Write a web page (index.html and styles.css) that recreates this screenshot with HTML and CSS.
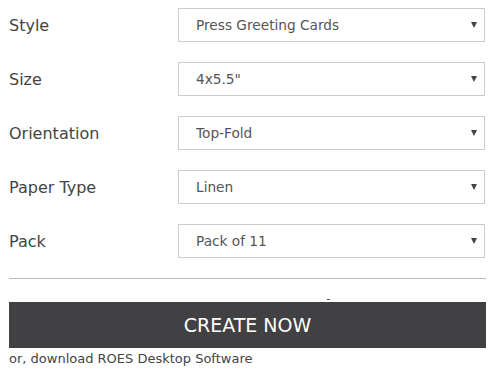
FILE: index.html
```html
<!DOCTYPE html>
<html lang="en">
<head>
    <meta charset="UTF-8">
    <meta name="viewport" content="width=device-width, initial-scale=1.0">
    <title>Press Greeting Cards</title>
    <link rel="stylesheet" href="styles.css">
</head>
<body>

<form class="options">
    <div class="row">
        <label for="style">Style</label>
        <div class="select-box">
            <select id="style">
                <option>Press Greeting Cards</option>
            </select>
        </div>
    </div>
    <div class="row">
        <label for="size">Size</label>
        <div class="select-box">
            <select id="size">
                <option>4x5.5"</option>
            </select>
        </div>
    </div>
    <div class="row">
        <label for="orientation">Orientation</label>
        <div class="select-box">
            <select id="orientation">
                <option>Top-Fold</option>
            </select>
        </div>
    </div>
    <div class="row">
        <label for="paper">Paper Type</label>
        <div class="select-box">
            <select id="paper">
                <option>Linen</option>
            </select>
        </div>
    </div>
    <div class="row">
        <label for="pack">Pack</label>
        <div class="select-box">
            <select id="pack">
                <option>Pack of 11</option>
            </select>
        </div>
    </div>

    <hr class="divider">

    <div class="actions">
        <span class="dot"></span>
        <button type="button" class="create">CREATE NOW</button>
        <p class="download">or, download ROES Desktop Software</p>
    </div>
</form>

</body>
</html>
```

FILE: styles.css
```css
body {
    margin: 0;
    font-family: "DejaVu Sans", "Open Sans", sans-serif;
    color: #444;
    background: #fff;
}
.options {
    width: 477px;
    padding: 8px 0 0 9px;
}
.row {
    display: grid;
    grid-template-columns: 169px 307px;
    align-items: center;
    margin-bottom: 20px;
}
.row label {
    font-size: 16px;
    color: #444;
}
.select-box {
    position: relative;
}
.select-box::after {
    content: "";
    position: absolute;
    right: 8px;
    top: 14px;
    border-left: 3px solid transparent;
    border-right: 3px solid transparent;
    border-top: 6px solid #444;
}
.select-box select {
    -webkit-appearance: none;
    appearance: none;
    display: block;
    width: 100%;
    height: 34px;
    margin: 0;
    padding: 0 30px 0 17px;
    border: 1px solid #ccc;
    border-radius: 0;
    background: #fff;
    font-family: inherit;
    font-size: 13.7px;
    color: #555;
}
.divider {
    margin: 0;
    border: 0;
    border-top: 1px solid #bbb;
}
.actions {
    position: relative;
    padding-top: 23px;
}
.dot {
    position: absolute;
    left: 318px;
    top: 20px;
    width: 3px;
    height: 1px;
    background: #555;
}
.create {
    display: block;
    width: 100%;
    height: 46px;
    border: none;
    background-color: #414042;
    color: #fff;
    font-family: inherit;
    font-size: 19px;
    cursor: pointer;
}
.download {
    margin: 3px 0 0;
    font-size: 13px;
    color: #444;
}
```
